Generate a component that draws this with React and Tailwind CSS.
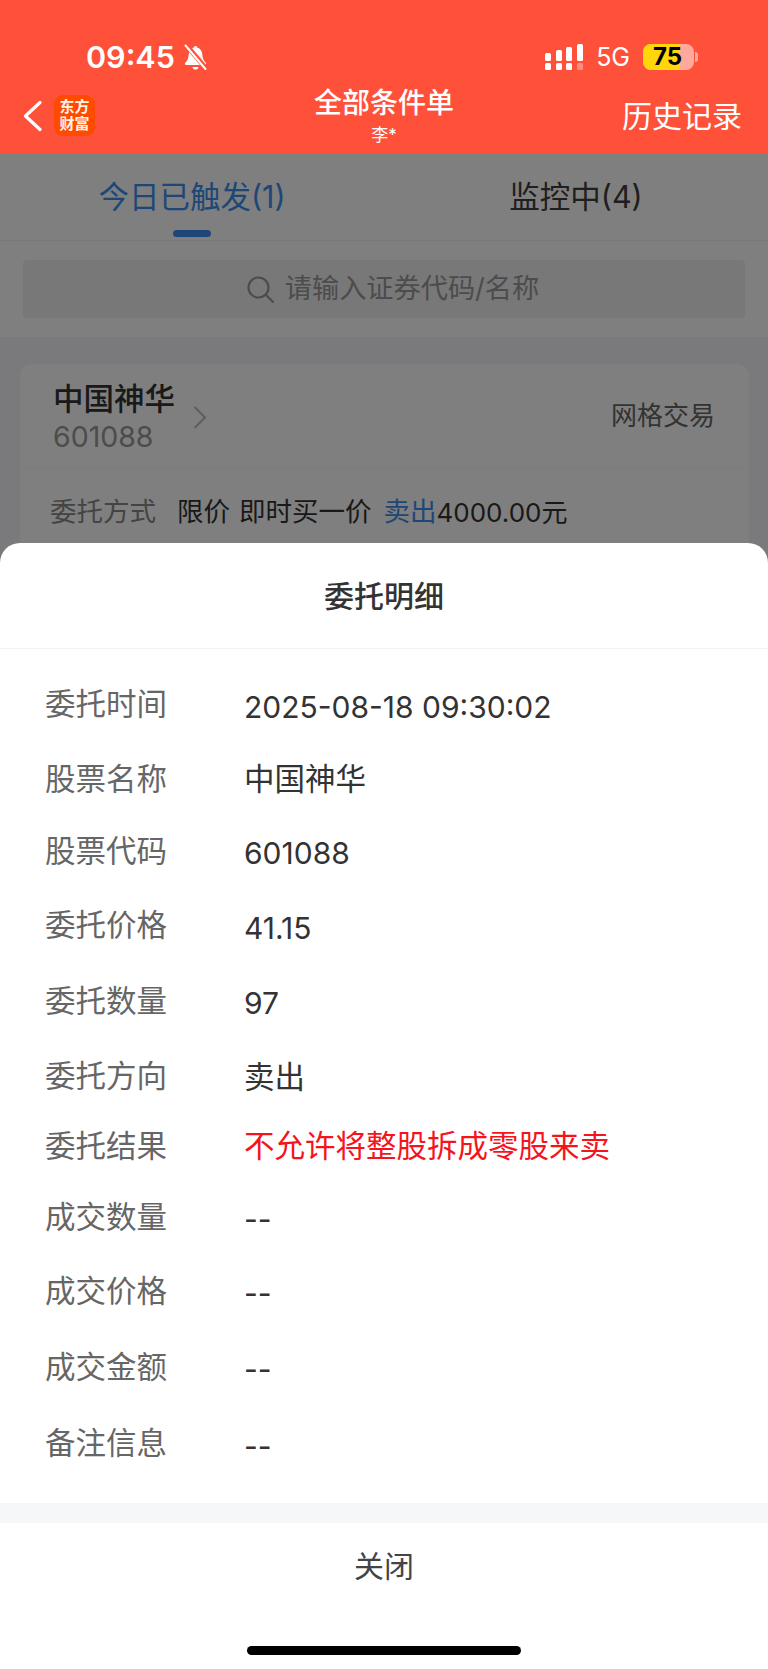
const rows = [
  { label: '委托时间', value: '2025-08-18 09:30:02', h: 'h-[74px]', v: 'pt-[6px] text-[30px]' },
  { label: '股票名称', value: '中国神华', h: 'h-[76px]', v: 'text-[30.5px]' },
  { label: '股票代码', value: '601088', h: 'h-[67px]', v: 'pt-[6px] text-[30px]' },
  { label: '委托价格', value: '41.15', h: 'h-[81px]', v: 'pt-[7px] text-[30px]' },
  { label: '委托数量', value: '97', h: 'h-[71px]', v: 'pt-[6px] text-[30px]' },
  { label: '委托方向', value: '卖出', h: 'h-[79px]', v: 'pt-[2px] text-[30.5px]' },
  { label: '委托结果', value: '不允许将整股拆成零股来卖', h: 'h-[61px]', v: 'text-[30.5px]', red: true },
  { label: '成交数量', value: '--', h: 'h-[81px]', v: 'pt-[6px] text-[30px]' },
  { label: '成交价格', value: '--', h: 'h-[68px]', v: 'pt-[4px] text-[30px]' },
  { label: '成交金额', value: '--', h: 'h-[84px]', v: 'pt-[4px] text-[30px]' },
  { label: '备注信息', value: '--', h: 'h-[68px]', v: 'pt-[6px] text-[30px]' },
];

function BellSlash() {
  return (
    <svg width="25" height="27" viewBox="0 0 25 27" className="ml-[8px]">
      <path d="M12.5 2c-.9 0-1.600.7-1.700 1.500C7.700 4.300 6 7 5.700 10.500 5.400 14 4.700 16.500 2.300 18.700 1.500 19.500 1.900 21 3.200 21h18.600c1.300 0 1.700-1.500.9-2.300-2.400-2.200-3.100-4.700-3.400-8.200C19 7 17.300 4.300 14.200 3.500 14.100 2.700 13.400 2 12.500 2z" fill="#fff" />
      <path d="M9.300 23h6.400c-.4 1.600-1.700 2.600-3.200 2.600S9.700 24.600 9.300 23z" fill="#fff" />
      <path d="M3.500 1.500 23.500 25" stroke="#FF5039" strokeWidth="5" />
      <path d="M2.500 1.500 22.500 25" stroke="#fff" strokeWidth="2" strokeLinecap="round" />
    </svg>
  );
}

function Signal() {
  return (
    <svg width="38" height="27" viewBox="0 0 38 27">
      <rect x="0" y="9" width="6" height="8" rx="1.500" fill="#fff" />
      <rect x="11" y="6" width="6" height="11" rx="1.500" fill="#fff" />
      <rect x="21" y="3" width="6" height="14" rx="1.500" fill="#fff" />
      <rect x="32" y="0" width="6" height="17" rx="1.500" fill="#fff" />
      <rect x="0" y="19" width="6" height="7" rx="1.500" fill="#fff" />
      <rect x="11" y="19" width="6" height="7" rx="1.500" fill="#fff" />
      <rect x="21" y="19" width="6" height="7" rx="1.500" fill="#fff" />
      <rect x="32" y="19" width="6" height="7" rx="1.500" fill="#fff" fillOpacity="0.35" />
    </svg>
  );
}

function SearchIcon() {
  return (
    <svg width="27" height="27" viewBox="0 0 27 27" fill="none" stroke="currentColor" strokeWidth="2.200" strokeLinecap="round">
      <ellipse cx="11.500" cy="11.500" rx="10" ry="10" />
      <path d="M18.800 18.800 26 26" />
    </svg>
  );
}

export default function App() {
  return (
    <div className="relative h-[1669px] w-[768px] overflow-hidden bg-[#f5f5f8] [font-family:Inter,'Noto_Sans_CJK_SC',sans-serif]">
      {/* cabecera roja, queda encima del velo */}
      <header className="relative z-20 h-[154px] bg-[#FF5039] text-white">
        <div className="flex h-[88px] items-start justify-between pt-[37px]">
          <div className="ml-[86px] flex items-center">
            <span className="text-[30.5px] leading-[40px] font-semibold">09:45</span>
            <BellSlash />
          </div>
          <div className="mr-[70px] flex items-center">
            <Signal />
            <span className="ml-[13px] text-[25px] leading-[40px] whitespace-nowrap">5G</span>
            <div className="relative ml-[13px] flex h-[26px] w-[51px] items-center justify-center rounded-[8px] bg-white/50">
              <div className="absolute inset-y-0 left-0 w-[37px] rounded-l-[8px] bg-[#FFD60A]" />
              <span className="relative ml-[-2px] text-[24px] leading-[26px] font-bold text-black">75</span>
            </div>
            <div className="ml-[1px] h-[10px] w-[3px] rounded-r-full bg-white/50" />
          </div>
        </div>
        <div className="flex h-[54px] items-center">
          <div className="flex flex-1 items-center">
            <svg width="20" height="32" viewBox="0 0 20 32" fill="none" stroke="currentColor" strokeWidth="3.200" strokeLinecap="round" strokeLinejoin="round" className="ml-[22px] mt-[2px]">
              <path d="M18 2.500 3.500 16 18 29.500" />
            </svg>
            <div className="ml-[12px] flex h-[41px] w-[41px] flex-col items-center justify-center rounded-[9px] bg-[#FF4B00] text-[15px] leading-[17px] font-bold text-[#fff3e6]">
              <span>东方</span>
              <span>财富</span>
            </div>
          </div>
          <div className="flex flex-col items-center">
            <span className="text-[28px] leading-[38px] font-medium">全部条件单</span>
            <span className="mt-[2px] text-[17px] leading-[22px]">李*</span>
          </div>
          <div className="flex flex-1 justify-end">
            <span className="mt-[2px] mr-[26px] text-[30px] leading-[40px]">历史记录</span>
          </div>
        </div>
      </header>

      {/* pantalla de fondo */}
      <div className="flex h-[87px] border-b border-[#f0f0f0] bg-white">
        <div className="relative flex flex-1 items-center justify-center pb-[1px]">
          <span className="text-[30.5px] leading-[40px] text-[#3d8fee]">今日已触发(1)</span>
          <div className="absolute bottom-[3px] left-[173px] h-[7px] w-[38px] rounded-full bg-[#3d8fee]" />
        </div>
        <div className="flex flex-1 items-center justify-center pb-[1px]">
          <span className="text-[30.5px] leading-[40px] text-[#3f3f3f]">监控中(4)</span>
        </div>
      </div>
      <div className="bg-white px-[23px] pt-[19px] pb-[19px]">
        <div className="flex h-[58px] items-center justify-center rounded-[4px] bg-[#f0f0f3] pl-[18px] text-[#999]">
          <SearchIcon />
          <span className="ml-[11px] text-[27.2px] leading-[36px]">请输入证券代码/名称</span>
        </div>
      </div>
      <div className="mt-[27px] mr-[19px] ml-[20px] h-[300px] rounded-[12px] bg-white">
        <div className="flex h-[105px] items-center justify-between border-b border-[#f7f7f7] pr-[34px] pl-[33px]">
          <div className="flex items-center pt-[3px]">
            <div className="w-[122px]">
              <div className="text-[30.5px] leading-[38px] font-medium whitespace-nowrap text-[#333]">中国神华</div>
              <div className="mt-[1px] text-[28.5px] leading-[36px] text-[#999]">601088</div>
            </div>
            <svg width="14" height="23" viewBox="0 0 14 23" fill="none" stroke="#bbb" strokeWidth="2" className="ml-[18px]">
              <path d="M1.500 1 12 11.500 1.500 22" />
            </svg>
          </div>
          <span className="text-[26px] leading-[36px] text-[#666]">网格交易</span>
        </div>
        <div className="flex h-[86px] items-center pl-[30px] text-[26.5px] text-[#333]">
          <span className="text-[#888]">委托方式</span>
          <span className="ml-[21px]">限价</span>
          <span className="ml-[9px]">即时买一价</span>
          <span className="ml-[12px] text-[#3d8fee]">卖出</span>
          <span className="text-[26px]">4000.00元</span>
        </div>
      </div>

      <div className="absolute inset-0 z-10 bg-black/50" />

      {/* hoja de detalle */}
      <div className="absolute right-0 bottom-0 left-0 z-20 flex h-[1126px] flex-col overflow-hidden rounded-t-[20px] bg-white">
        <div className="flex h-[106px] shrink-0 items-center justify-center border-b border-[#f2f2f2] pt-[2px] text-[30px] font-medium text-[#333]">
          委托明细
        </div>
        <div className="flex flex-col pt-[18px]">
          {rows.map((r) => (
            <div key={r.label} className={`flex items-center pl-[45px] ${r.h}`}>
              <span className="w-[199px] shrink-0 text-[30.5px] text-[#666]">{r.label}</span>
              <span className={`${r.v} ${r.red ? 'text-[#f5141c]' : 'text-[#333]'}`}>{r.value}</span>
            </div>
          ))}
        </div>
        <div className="mt-[26px] h-[20px] shrink-0 bg-[#f6f7f9]" />
        <div className="flex h-[86px] shrink-0 items-center justify-center text-[30px] text-[#444]">关闭</div>
        <div className="mx-auto mt-[37px] h-[9px] w-[274px] rounded-full bg-black" />
      </div>
    </div>
  );
}
